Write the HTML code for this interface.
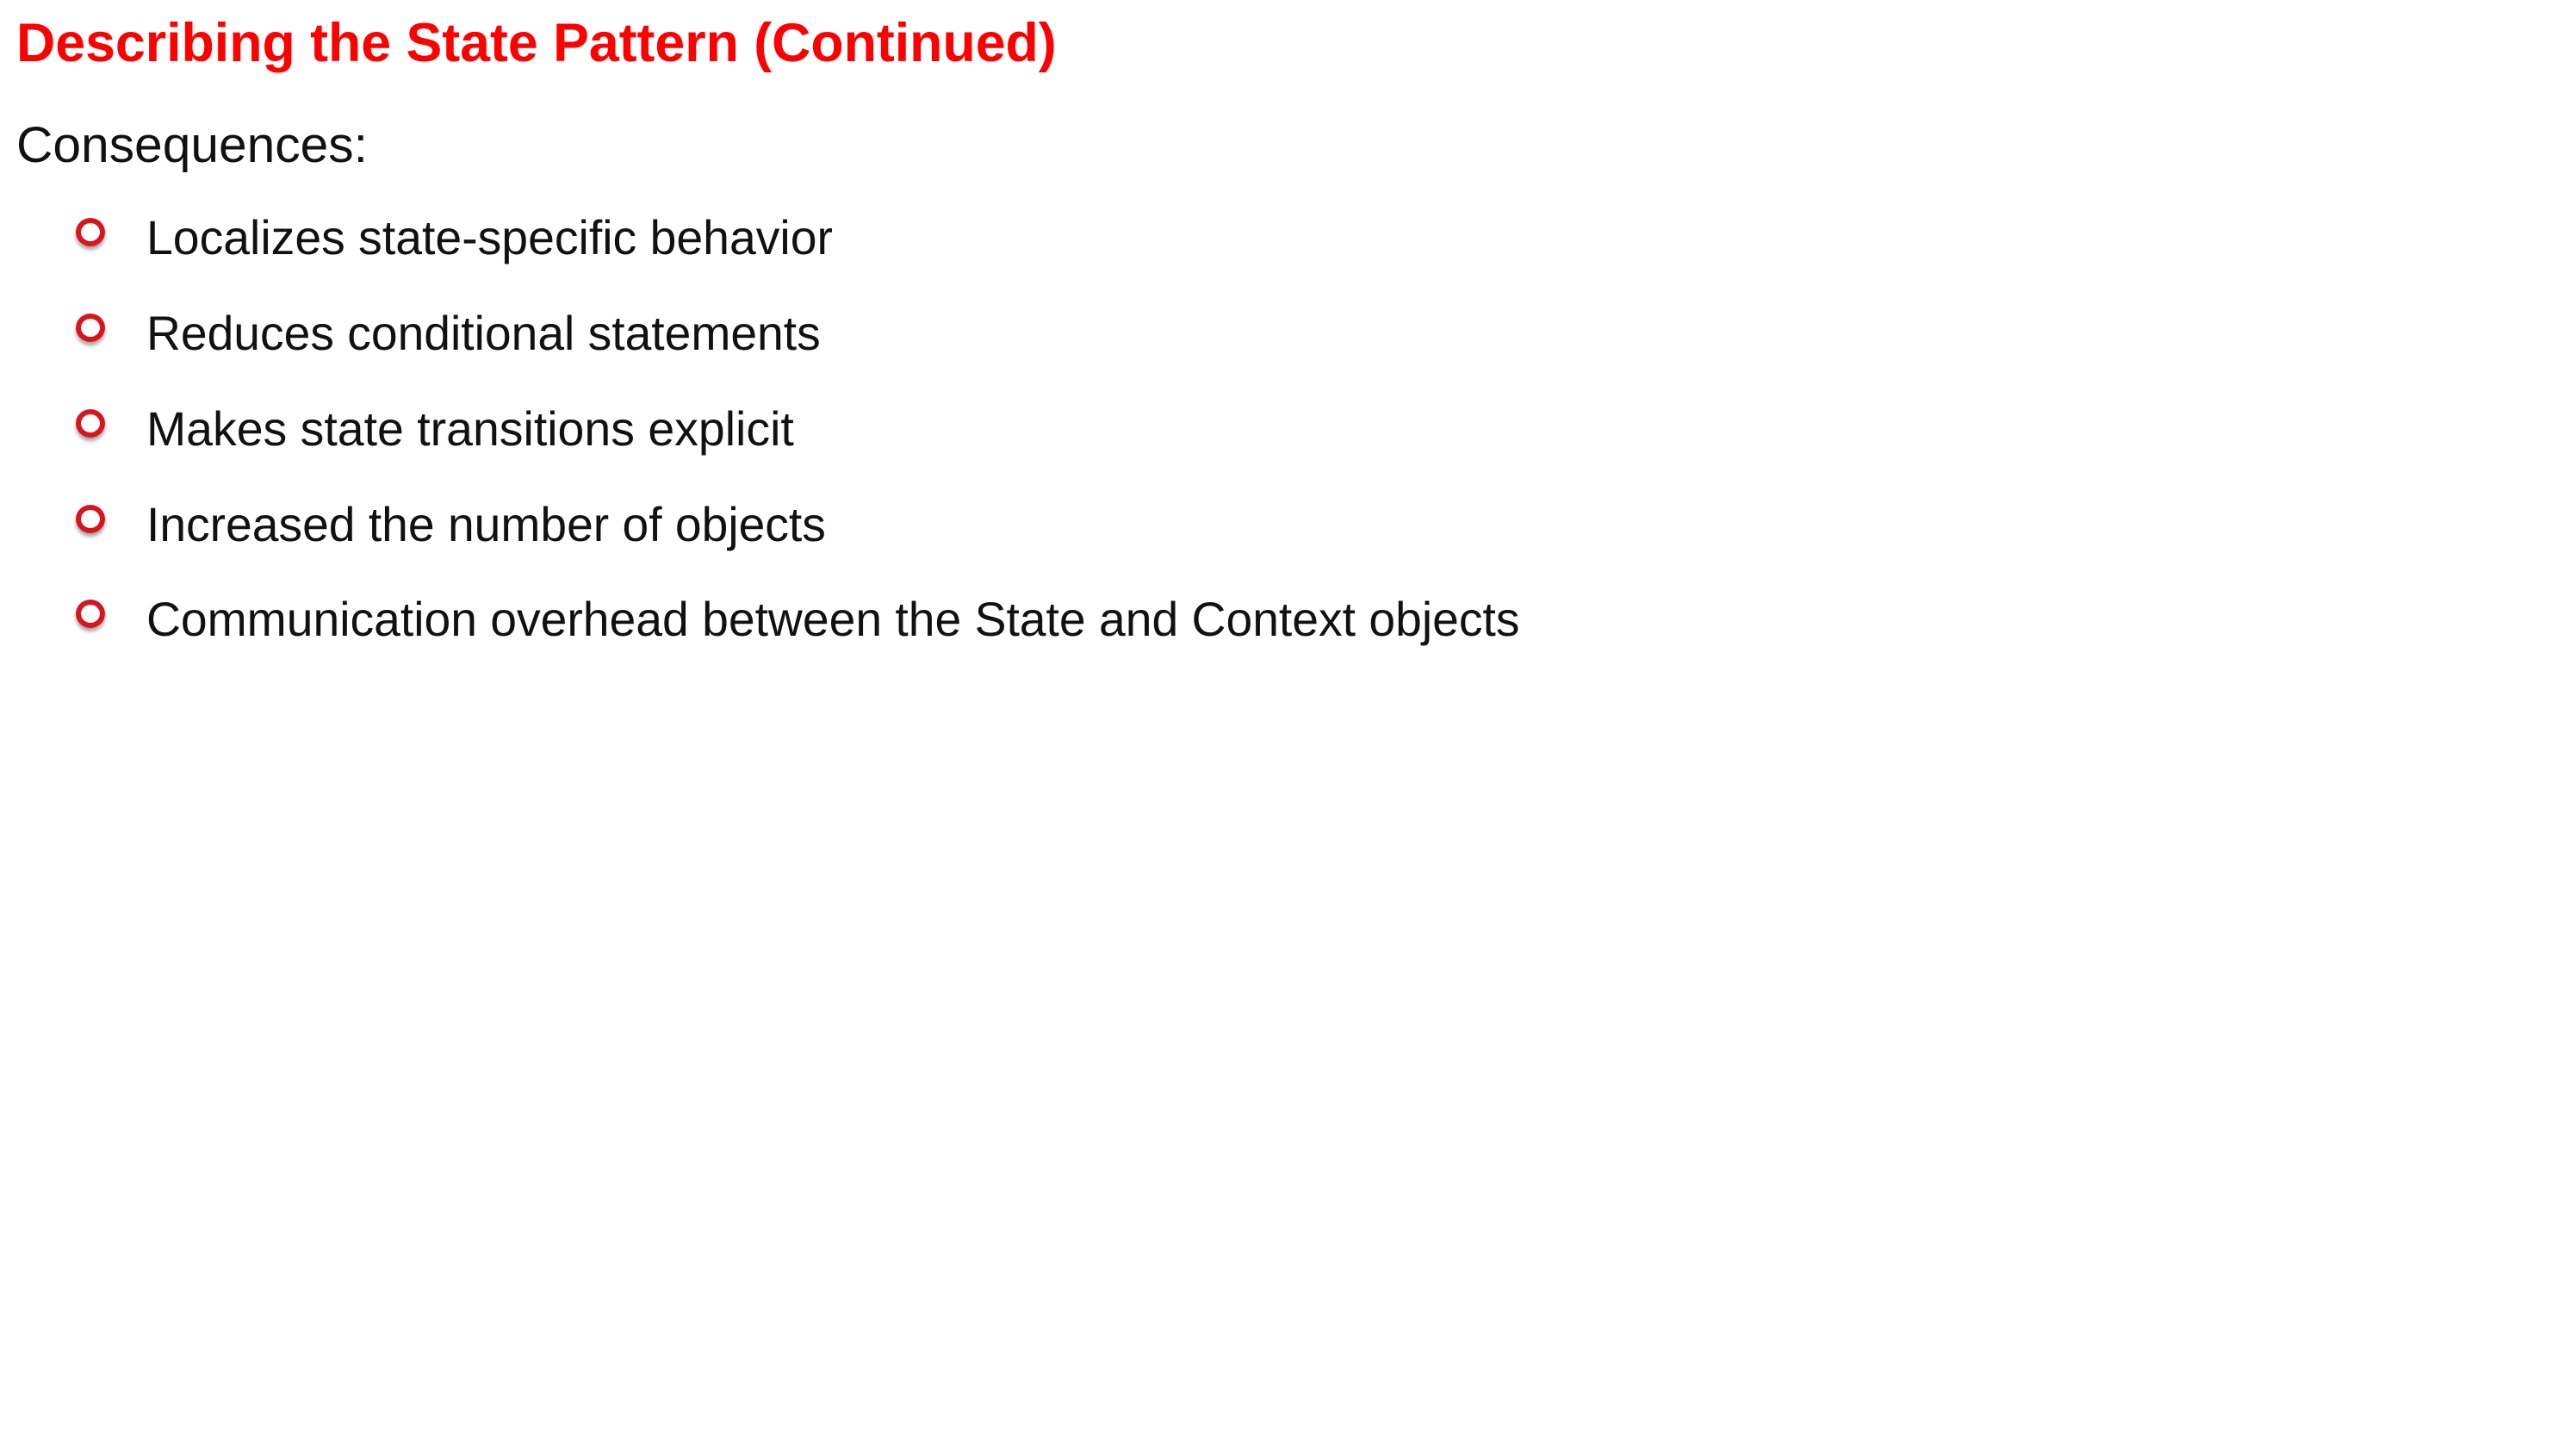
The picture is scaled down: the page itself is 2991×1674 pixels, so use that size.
<!DOCTYPE html>
<html><head><meta charset="utf-8"><style>
html,body{margin:0;padding:0;background:#fff;width:2991px;height:1674px;overflow:hidden}
.t{position:absolute;white-space:nowrap;font-family:"Liberation Sans",Arial,sans-serif;line-height:1}
.h{font-size:70px;font-weight:bold;color:#f00;left:19px}
.c{font-size:64px;color:#111;left:19px}
.i{font-size:64px;color:#111;left:170px}
.b{position:absolute;left:88px;width:22px;height:21px;border:6px solid #d8141c;border-radius:50%;box-shadow:0 4px 4px rgba(0,0,0,.35)}
</style></head><body>
<div class="t h" data-w="1208" data-bl="72">Describing the State Pattern (Continued)</div>
<div class="t c" data-w="408" data-bl="190">Consequences:</div>
<div class="b" style="top:253px"></div>
<div class="t i" data-bl="296" data-w="797">Localizes state-specific behavior</div>
<div class="b" style="top:364px"></div>
<div class="t i" data-bl="407" data-w="783">Reduces conditional statements</div>
<div class="b" style="top:475px"></div>
<div class="t i" data-bl="518" data-w="752">Makes state transitions explicit</div>
<div class="b" style="top:586px"></div>
<div class="t i" data-bl="629" data-w="789">Increased the number of objects</div>
<div class="b" style="top:696px"></div>
<div class="t i" data-bl="739" data-w="1595">Communication overhead between the State and Context objects</div>
<script>
document.querySelectorAll('[data-w]').forEach(function(e){
  var w=e.getBoundingClientRect().width;var t=+e.getAttribute('data-w');
  var fs=parseFloat(getComputedStyle(e).fontSize);
  var nf=w>0?fs*t/w:fs;
  e.style.fontSize=nf+'px';
  e.style.top=(+e.getAttribute('data-bl')-0.8465*nf)+'px';
});
</script>
</body></html>
